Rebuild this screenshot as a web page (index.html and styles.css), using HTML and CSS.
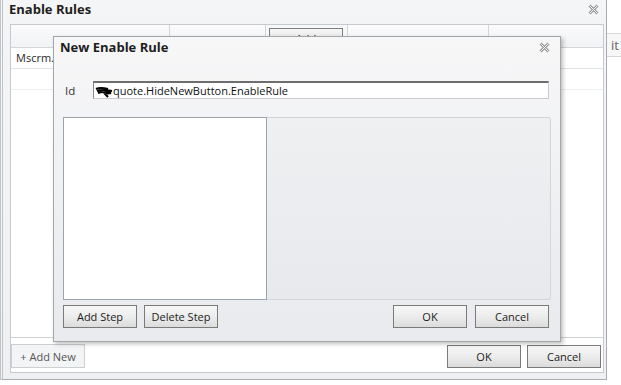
FILE: index.html
```html
<!DOCTYPE html>
<html lang="en">
<head>
    <meta charset="UTF-8">
    <title>Enable Rules</title>
    <link rel="stylesheet" href="styles.css">
</head>
<body>
    <!-- Outer dialog -->
    <div class="dialog">
        <div class="dialog-title">
            <span>Enable Rules</span>
            <svg class="close" width="11" height="11" viewBox="0 0 11 11">
                <path d="M1.5 1.5 L9.5 9.5 M9.5 1.5 L1.5 9.5" stroke="#9a9a9a" stroke-width="3"/>
                <path d="M1.5 1.5 L9.5 9.5 M9.5 1.5 L1.5 9.5" stroke="#f4f4f4" stroke-width="1"/>
            </svg>
        </div>

        <div class="panel">
            <div class="grid">
                <div class="grid-head">
                    <div class="cell w1"></div>
                    <div class="cell w2"></div>
                    <div class="cell w3"><button class="head-btn">Add</button></div>
                    <div class="cell w4"></div>
                    <div class="cell w5"></div>
                </div>
                <div class="grid-row">Mscrm.IsEntityAvailable</div>
                <div class="grid-row empty"></div>
            </div>
            <div class="bottom-bar">
                <button class="btn flat">+ Add New</button>
                <div class="spacer"></div>
                <button class="btn">OK</button>
                <button class="btn">Cancel</button>
            </div>
        </div>
    </div>

    <!-- Something behind, peeking out on the right -->
    <div class="behind">
        <div class="behind-tab">it</div>
    </div>

    <!-- Modal dialog on top -->
    <div class="modal">
        <div class="modal-title">
            <span>New Enable Rule</span>
            <svg class="close" width="11" height="11" viewBox="0 0 11 11">
                <path d="M1.5 1.5 L9.5 9.5 M9.5 1.5 L1.5 9.5" stroke="#9a9a9a" stroke-width="3"/>
                <path d="M1.5 1.5 L9.5 9.5 M9.5 1.5 L1.5 9.5" stroke="#f4f4f4" stroke-width="1"/>
            </svg>
        </div>
        <div class="modal-body">
            <div class="id-row">
                <label class="id-label">Id</label>
                <div class="id-input">
                    <svg class="scribble" width="20" height="14" viewBox="0 0 20 14">
                        <path d="M1 4 C5 2 9 3 13 4 M2 6 C7 4 12 5 17 6 M3 8 C8 6 12 7 16 8 L10 9 L13 12" stroke="#000" stroke-width="2" fill="none"/>
                    </svg>
                    <span>quote.HideNewButton.EnableRule</span>
                </div>
            </div>
            <div class="panes">
                <div class="steps-list"></div>
                <div class="step-detail"></div>
            </div>
            <div class="modal-buttons">
                <button class="btn">Add Step</button>
                <button class="btn">Delete Step</button>
                <div class="spacer"></div>
                <button class="btn">OK</button>
                <button class="btn">Cancel</button>
            </div>
        </div>
    </div>
</body>
</html>
```

FILE: styles.css
```css
body {
    margin: 0;
    padding: 0;
    font-family: 'Open Sans', 'Noto Sans', sans-serif;
    font-size: 11px;
    color: #222;
    background: #ffffff;
    display: flex;
    align-items: flex-start;
    height: 385px;
    overflow: hidden;
}

button {
    font-family: inherit;
    font-size: 11px;
    color: #222;
    padding: 0;
}

.spacer {
    flex: 1;
}

.close {
    display: block;
}

/* Outer dialog */
.dialog {
    width: 607px;
    height: 380px;
    box-sizing: border-box;
    flex-shrink: 0;
    background: linear-gradient(#f4f5f6, #eef0f2);
    border: 1px solid #a9adb2;
    border-top: none;
    border-left: 3px double #c2c5c9;
    display: flex;
    flex-direction: column;
}

.dialog-title {
    height: 24px;
    display: flex;
    align-items: center;
    justify-content: space-between;
    padding: 0 7px 6px 6px;
    box-sizing: border-box;
    font-size: 13px;
    font-weight: bold;
    color: #1e1e1e;
}

.panel {
    width: 594px;
    height: 349px;
    margin-left: 7px;
    box-sizing: border-box;
    background: #ffffff;
    border: 1px solid #c6c9cd;
    display: flex;
    flex-direction: column;
}

.grid {
    flex: 1;
}

.grid-head {
    height: 23px;
    display: flex;
    background: linear-gradient(#fbfbfc, #f1f2f4);
    border-bottom: 1px solid #d3d6d9;
    box-sizing: border-box;
}

.cell {
    height: 100%;
    box-sizing: border-box;
    border-right: 1px solid #d3d6d9;
}

.w1 { width: 159px; }
.w2 { width: 96px; }
.w3 { width: 82px; padding: 3px 0 0 3px; background: #f7f8f9; }
.w4 { width: 141px; }
.w5 { flex: 1; border-right: none; }

.head-btn {
    width: 74px;
    height: 20px;
    border: 1px solid #7d7d7d;
    background: linear-gradient(#f6f6f6, #dedede);
    font-size: 11px;
}

.grid-row {
    height: 21px;
    line-height: 20px;
    padding-left: 5px;
    box-sizing: border-box;
    border-bottom: 1px solid #dfe1e4;
    color: #2a2a2a;
}

.grid-row.empty {
    border-bottom-color: #eeeff1;
}

.bottom-bar {
    height: 35px;
    box-sizing: border-box;
    border-top: 1px solid #d0d3d6;
    display: flex;
    align-items: flex-start;
    gap: 6px;
    padding: 6px 2px 0 0;
}

.btn {
    width: 74px;
    height: 23px;
    box-sizing: border-box;
    border: 1px solid #7a7a7a;
    background: linear-gradient(#f7f7f7 0%, #ececec 50%, #dcdcdc 100%);
    font-size: 11px;
    color: #1c1c1c;
}

.bottom-bar .btn {
    margin-top: 1px;
}

.btn.flat {
    height: 24px;
    margin-top: 0;
    border: 1px solid #cdd0d3;
    background: #f3f4f5;
    color: #555;
}

/* Sliver of whatever sits behind the dialog */
.behind {
    flex: 1;
    padding-top: 33px;
}

.behind-tab {
    height: 22px;
    line-height: 22px;
    padding-left: 4px;
    border-top: 1px solid #d6d8db;
    border-bottom: 1px solid #d6d8db;
    background: #f7f7f8;
    color: #666;
    font-size: 13px;
    white-space: nowrap;
}

/* Modal dialog */
.modal {
    position: absolute;
    left: 53px;
    top: 36px;
    width: 508px;
    height: 306px;
    box-sizing: border-box;
    border: 1px solid #a3a7ac;
    background: linear-gradient(#f7f7f8, #e8eaed);
    box-shadow: 2px 2px 4px rgba(0, 0, 0, 0.25);
}

.modal-title {
    height: 20px;
    display: flex;
    align-items: center;
    justify-content: space-between;
    padding: 0 10px 0 6px;
    font-size: 13px;
    font-weight: bold;
    color: #1e1e1e;
}

.modal-body {
    padding: 0 9px 0 9px;
}

.id-row {
    margin-top: 24px;
    height: 18px;
    display: flex;
    align-items: center;
}

.id-label {
    width: 30px;
    padding-left: 2px;
    box-sizing: border-box;
    font-size: 11.5px;
    color: #333;
}

.id-input {
    width: 456px;
    height: 18px;
    box-sizing: border-box;
    border: 1px solid #c9cbce;
    border-top: 2px solid #6e6e6e;
    border-left: 1px solid #8a8a8a;
    background: #ffffff;
    display: flex;
    align-items: center;
    font-size: 11px;
    color: #111;
}

.scribble {
    margin-left: 1px;
    margin-top: 2px;
    margin-right: -2px;
}

.panes {
    margin-top: 18px;
    height: 183px;
    display: flex;
}

.steps-list {
    width: 204px;
    box-sizing: border-box;
    background: #ffffff;
    border: 1px solid #9aa4ae;
}

.step-detail {
    flex: 1;
    background: linear-gradient(#eff0f2, #e7e9ec);
    border: 1px solid #d2d5d9;
    border-left: none;
    border-radius: 0 3px 3px 0;
}

.modal-buttons {
    margin-top: 5px;
    padding-right: 2px;
    display: flex;
    gap: 7px;
}

.modal-buttons .btn:nth-child(5) {
    margin-left: 1px;
}
```
